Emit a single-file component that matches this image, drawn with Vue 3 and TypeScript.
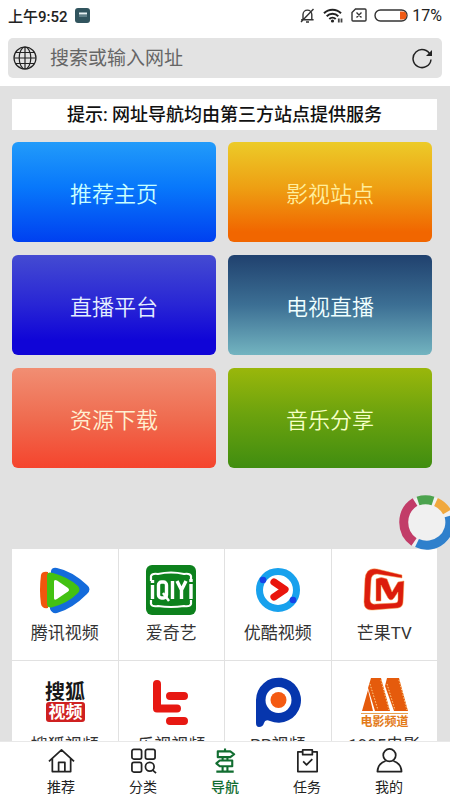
<script setup lang="ts">
import { ref } from 'vue'

interface Tile { label: string; tone: string }
interface Site { label: string; icon: string }
interface Tab { label: string; icon: string }

const address = ref('')
const current = ref('导航')

const tiles: Tile[] = [
  { label: '推荐主页', tone: 'blue' },
  { label: '影视站点', tone: 'amber' },
  { label: '直播平台', tone: 'indigo' },
  { label: '电视直播', tone: 'teal' },
  { label: '资源下载', tone: 'coral' },
  { label: '音乐分享', tone: 'green' },
]

const sites: Site[] = [
  { label: '腾讯视频', icon: 'tencent' },
  { label: '爱奇艺', icon: 'iqiyi' },
  { label: '优酷视频', icon: 'youku' },
  { label: '芒果TV', icon: 'mango' },
  { label: '搜狐视频', icon: 'sohu' },
  { label: '乐视视频', icon: 'le' },
  { label: 'PP视频', icon: 'pp' },
  { label: '1905电影', icon: 'm1905' },
]

const tabs: Tab[] = [
  { label: '推荐', icon: 'home' },
  { label: '分类', icon: 'category' },
  { label: '导航', icon: 'sign' },
  { label: '任务', icon: 'task' },
  { label: '我的', icon: 'user' },
]
</script>

<template>
  <div class="app">
    <header class="top">
      <div class="status">
        <span class="time">上午9:52</span>
        <svg class="badge" viewBox="0 0 15 15" aria-hidden="true">
          <rect width="15" height="15" rx="3" fill="#31545e" />
          <path d="M4 5.5h8" stroke="#e8f2f4" stroke-width="2" />
          <path d="M4 8h8" stroke="#8fabb3" stroke-width="1" />
        </svg>
        <span class="spacer"></span>
        <svg class="bell" viewBox="0 0 15 15" fill="none" stroke="#333" stroke-width="1.4" aria-hidden="true">
          <path d="M3 11.5V6.5a4.4 4.4 0 0 1 8.8 0v5M1.2 11.8h12.4M6 14h3M1 14 13.5 1" />
        </svg>
        <svg class="wifi" viewBox="0 0 20 15" fill="none" stroke="#222" stroke-width="2" aria-hidden="true">
          <path d="M1 5.2a12 12 0 0 1 17 0M3.7 8.2a8.3 8.3 0 0 1 11.6 0M6.3 11a4.7 4.7 0 0 1 6.4 0" />
          <circle cx="9.5" cy="13" r="1.6" fill="#222" stroke="none" />
          <rect x="14" y="9.5" width="6" height="5.500" fill="#fff" stroke="none" />
          <path d="M15.800 10.5v4M18.500 10.5v4" stroke="#444" stroke-width="1.8" />
        </svg>
        <svg class="sim" viewBox="0 0 16 14" fill="none" stroke="#333" stroke-width="1.4" aria-hidden="true">
          <path d="M4.5 1H14a1 1 0 0 1 1 1v10a1 1 0 0 1-1 1H2a1 1 0 0 1-1-1V4.5zM5.5 4.5l5 5M10.5 4.5l-5 5" />
        </svg>
        <svg class="battery" viewBox="0 0 34 13" aria-hidden="true">
          <rect x="1" y="1" width="32" height="11" rx="5.500" fill="#fff" stroke="#333" stroke-width="1.4" />
          <path d="M26 2.5h2.500a4 4 0 0 1 0 8H26z" fill="#f05a14" />
        </svg>
        <span class="percent">17%</span>
      </div>
      <form class="address" @submit.prevent>
        <svg class="globe" viewBox="0 0 24 24" fill="none" stroke="#222" stroke-width="1.2" aria-hidden="true">
          <circle cx="12" cy="12" r="11" />
          <ellipse cx="12" cy="12" rx="5.8" ry="11" />
          <path d="M12 1v22M1 12h22M3 6.5h18M3 17.5h18" />
        </svg>
        <input v-model="address" type="text" aria-label="网址" placeholder="搜索或输入网址" />
        <button class="reload" type="button" aria-label="刷新">
          <svg viewBox="0 0 22 22" fill="none" stroke="#222" stroke-width="1.5" aria-hidden="true">
            <path d="M19.4 8.2A9 9 0 1 0 20 12.5" />
            <path d="M21 3v6h-6z" fill="#222" stroke="none" />
          </svg>
        </button>
      </form>
    </header>

    <main class="page">
      <p class="notice">提示: 网址导航均由第三方站点提供服务</p>
      <nav class="tiles" aria-label="栏目">
        <a v-for="tile in tiles" :key="tile.label" href="#" class="tile" :class="tile.tone">{{ tile.label }}</a>
      </nav>
      <nav class="sites" aria-label="站点">
        <a v-for="site in sites" :key="site.label" href="#" class="site">
          <svg v-if="site.icon === 'tencent'" viewBox="0 0 52 52" aria-hidden="true">
            <path d="M2 11Q3 7 9 8V44Q3 45 2 40Q0 26 2 11z" fill="#f1560d" />
            <path d="M12 7Q13 3 18 4Q33 7 48 21Q53 25 48 30Q33 45 18 49Q13 50 11 45z" fill="#146bdb" />
            <path d="M8 12Q8 7 14 9Q29 13 39 22Q42 26 39 29Q29 39 14 43Q8 45 8 39z" fill="#43c112" />
            <path d="M15 17.5Q15 15 18 16.5L29 24Q31 26 29 27.500L18 35Q15 37 15 34z" fill="#fff" />
          </svg>
          <svg v-else-if="site.icon === 'iqiyi'" viewBox="0 0 52 52" aria-hidden="true">
            <rect x="1" y="1" width="50" height="50" rx="6" fill="#0d811d" />
            <g fill="none" stroke="#fff">
              <path d="M6 17V12Q7 9 13 10Q26 7 39 10Q45 9 46 12V17" stroke-width="2.200" />
              <path d="M6 36V40Q7 43 13 42Q26 44 39 42Q45 43 46 40V36" stroke-width="2.200" />
              <path d="M7.500 21V35M27.500 17V35M46 20V35" stroke-width="3.400" />
              <path d="M7.500 16V19M46 15V18" stroke-width="3.400" />
              <rect x="13.500" y="18" width="8" height="16" rx="3" stroke-width="3.400" />
              <path d="M18 29L24 37" stroke-width="2.500" />
              <path d="M32 17L36.500 26L41 17M36.500 25V35" stroke-width="3.400" />
            </g>
          </svg>
          <svg v-else-if="site.icon === 'youku'" viewBox="0 0 52 52" aria-hidden="true">
            <circle cx="26" cy="26" r="18.500" fill="none" stroke="#18a1ed" stroke-width="7" />
            <circle cx="11" cy="16" r="3.300" fill="#1741e8" />
            <circle cx="41" cy="36" r="3.300" fill="#1741e8" />
            <path d="M22 18L33 25.500L22 33" fill="none" stroke="#e9150d" stroke-width="7.200" stroke-linecap="round" stroke-linejoin="round" />
          </svg>
          <svg v-else-if="site.icon === 'mango'" viewBox="0 0 52 52" aria-hidden="true">
            <path
              d="M44 11L19 5Q8 3 7 15L6 38Q6 47 15 46L40 44Q45 43 45 38L46 17L40 18L34 28L29 15Q23 12 18 15V37H23V21L30 34Q33 38 36 34L40 28V36Q40 39 37 39L18 40Q12 41 12 35L13 17Q13 10 19 10L44 14z"
              fill="#dc1c0c"
              stroke="#f6a04a"
              stroke-width="0.500"
            />
          </svg>
          <svg v-else-if="site.icon === 'sohu'" viewBox="0 0 52 52" aria-hidden="true">
            <text class="logo-dark" x="26" y="23" text-anchor="middle">搜狐</text>
            <rect x="7" y="26" width="39" height="20" rx="3" fill="#cf2020" />
            <text class="logo-light" x="26.500" y="42" text-anchor="middle">视频</text>
          </svg>
          <svg v-else-if="site.icon === 'le'" viewBox="0 0 52 52" aria-hidden="true">
            <path d="M12 8V32.500H32M25 20H39M25 45H39" fill="none" stroke="#e71812" stroke-width="8" stroke-linecap="round" stroke-linejoin="round" />
          </svg>
          <svg v-else-if="site.icon === 'pp'" viewBox="0 0 52 52" aria-hidden="true">
            <path d="M4 24A22.500 22.500 0 1 1 18 45Q13 43 12 47Q11 51 7 51Q4 51 4 47z" fill="#0636ad" />
            <circle cx="26.500" cy="24" r="13" fill="#fff" />
            <circle cx="26.500" cy="24" r="8" fill="#f45a12" />
          </svg>
          <svg v-else viewBox="0 0 52 52" aria-hidden="true">
            <path d="M4 35L10 14L15 35zM13 2H23L32 35H17L10 12zM29 2H41L50 35H36L27 10z" fill="#e55b0c" />
            <path d="M12 8L20 34M23 4L31 34M29 8L37 34M41 4L49 34" fill="none" stroke="#ffd08a" stroke-width="1" stroke-dasharray="1.500 1.500" />
            <path d="M3 37.500H50" stroke="#e8a050" stroke-width="1" />
            <text class="logo-film" x="26.500" y="50" text-anchor="middle">电影频道</text>
          </svg>
          <span>{{ site.label }}</span>
        </a>
      </nav>
    </main>

    <svg class="ring" viewBox="0 0 56 56" fill="none" stroke-width="9" aria-hidden="true">
      <circle cx="28" cy="28" r="27" fill="#f0f0f0" stroke="none" />
      <path d="M16 7A24 24 0 0 0 15 47" stroke="#c23c68" />
      <path d="M19 6A24 24 0 0 1 34 6" stroke="#4ca34e" />
      <path d="M37 7A24 24 0 0 1 48 17" stroke="#f0a83e" />
      <path d="M50 21A23 23 0 0 1 18 48" stroke="#2f80cc" />
    </svg>

    <nav class="tabs" aria-label="主导航">
      <button
        v-for="tab in tabs"
        :key="tab.label"
        type="button"
        class="tab"
        :class="{ active: tab.label === current }"
        @click="current = tab.label"
      >
        <svg viewBox="0 0 28 28" fill="none" stroke="currentColor" stroke-width="1.800" stroke-linejoin="round" aria-hidden="true">
          <path v-if="tab.icon === 'home'" d="M1 15L14 3L27 15M4.500 12V25.500H23.500V12M11 25V16H17.500V25" />
          <g v-else-if="tab.icon === 'category'">
            <rect x="2" y="2.500" width="10" height="10" rx="2" />
            <rect x="16" y="2.500" width="10" height="10" rx="2" />
            <rect x="2" y="16" width="10" height="10" rx="2" />
            <circle cx="20.500" cy="20.500" r="4.500" />
            <path d="M23.500 24L27 27" />
          </g>
          <g v-else-if="tab.icon === 'sign'" stroke-width="2.200">
            <path d="M6 4.500H19L23 7.500L19 10.500H6zM21 14H8L4.500 17L8 20H21zM13.500 1.500V4.500M11 10.500V14M16 10.500V14M11 20V25M16 20V25M4.500 25.500H22.500" />
          </g>
          <g v-else-if="tab.icon === 'task'">
            <path d="M9 5H4V25.500H24V5H19M9 3H19V8H9zM9.500 15L13 18.500L19 12.500" />
          </g>
          <g v-else>
            <circle cx="14" cy="8.500" r="6.500" />
            <path d="M10 14.500Q2 17 1.500 25.500H26.500Q26 17 18 14.500" />
          </g>
        </svg>
        <span>{{ tab.label }}</span>
      </button>
    </nav>
  </div>
</template>

<style>
html, body { margin: 0; }
</style>

<style scoped>
.app {
  position: relative;
  display: flex;
  flex-direction: column;
  height: 100vh;
  overflow: hidden;
  background: #fff;
  color: #222;
  font-family: Roboto, "Noto Sans CJK SC", sans-serif;
}
.app * { box-sizing: border-box; }
.top { flex: none; padding: 0 8px 8px; }
.status { display: flex; align-items: center; height: 38px; padding-bottom: 8px; font-size: 16px; }
.status svg { flex: none; }
.time { font-size: 15px; font-weight: 500; }
.badge { width: 15px; height: 15px; margin-left: 7px; }
.spacer { flex: 1; }
.bell { width: 15px; height: 15px; }
.wifi { width: 20px; height: 15px; margin-left: 8px; }
.sim { width: 16px; height: 14px; margin-left: 8px; }
.battery { width: 34px; height: 13px; margin-left: 7px; }
.percent { margin-left: 4px; }
.address { display: flex; align-items: center; height: 40px; padding: 0 8px 0 5px; border-radius: 5px; background: #e3e3e3; }
.globe { flex: none; width: 24px; height: 24px; }
.address input { flex: 1; min-width: 0; margin-left: 13px; padding: 0; border: 0; outline: 0; background: none; font: inherit; font-size: 19px; color: #222; }
.address input::placeholder { color: #666; opacity: 1; }
.reload { flex: none; width: 24px; height: 24px; padding: 1px; border: 0; background: none; }
.reload svg { display: block; width: 22px; height: 22px; }
.page { flex: 1; min-height: 0; overflow: hidden; padding: 13px 13px 0 12px; background: #e1e1e1; }
.notice { margin: 0 0 12px; background: #fff; font-size: 18px; font-weight: 500; line-height: 31px; text-align: center; white-space: nowrap; color: #111; }
.tiles { display: grid; grid-template-columns: 1fr 1fr; gap: 13px 12px; padding-right: 5px; }
.tile { display: flex; align-items: center; justify-content: center; height: 100px; border-radius: 6px; font-family: "Noto Sans CJK SC", sans-serif; font-size: 22px; font-weight: 350; text-decoration: none; }
.blue { background: linear-gradient(#229bfa, #0878fb 45%, #0040f0); color: #c8ffff; }
.amber { background: linear-gradient(#eccb29, #eea013 45%, #f16600 90%); color: #ffee9c; }
.indigo { background: linear-gradient(#444bd2, #2825d5 50%, #1005d7 85%); color: #e4efff; }
.teal { background: linear-gradient(#20416e, #3c6f94 50%, #73b4c0); color: #f0ffff; }
.coral { background: linear-gradient(#f18e73, #ef6c50 50%, #f5442d); color: #fff0d2; }
.green { background: linear-gradient(#9ab70b, #6da30e 45%, #408d10); color: #f6ffc5; }
.sites { display: grid; grid-template-columns: repeat(4, 1fr); gap: 1px; margin-top: 81px; background: #e1e1e1; }
.site { display: flex; flex-direction: column; align-items: center; height: 111px; padding-top: 15px; background: #fff; color: #333; font-size: 17px; line-height: 24px; text-decoration: none; white-space: nowrap; }
.site svg { flex: none; width: 52px; height: 52px; margin-bottom: 5px; }
.site text { font-family: "Noto Sans CJK SC", sans-serif; }
.logo-dark { font-size: 20px; font-weight: 700; fill: #181818; }
.logo-light { font-size: 17px; font-weight: 700; fill: #fff; }
.logo-film { font-size: 12px; font-weight: 700; fill: #e37a18; }
.ring { position: absolute; right: -5px; top: 495px; width: 56px; height: 56px; }
.tabs { display: grid; grid-template-columns: repeat(5, 1fr); flex: none; height: 59px; padding: 0 20px; border-top: 1px solid #e8e8e8; background: #fff; }
.tab { display: flex; flex-direction: column; align-items: center; padding: 5px 0 0; border: 0; background: none; color: #222; font: inherit; font-size: 14px; line-height: 20px; }
.tab svg { width: 27px; height: 27px; margin-bottom: 3px; }
.active { color: #116d30; font-weight: 500; }
</style>
